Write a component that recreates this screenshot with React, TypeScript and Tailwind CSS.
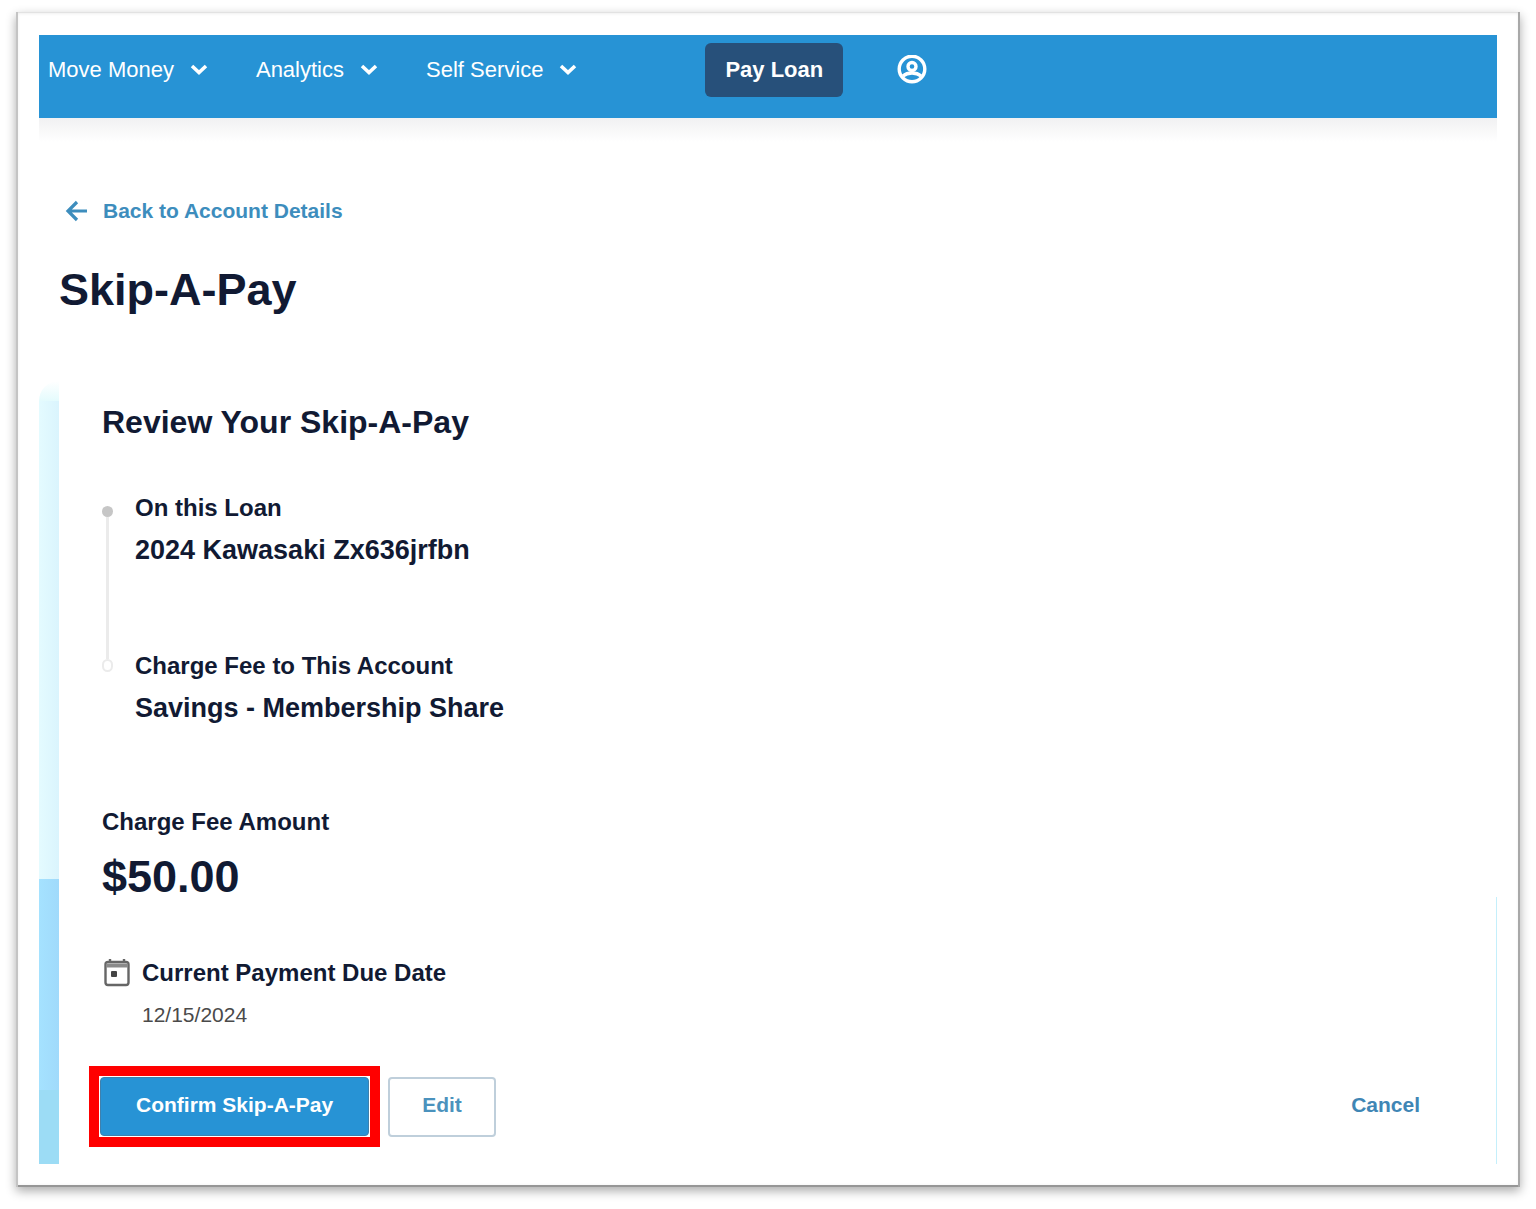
import React from 'react';

interface NavMenuProps {
  label: string;
}

const NavMenu: React.FC<NavMenuProps> = ({ label }) => (
  <button type="button" className="flex items-center gap-4 whitespace-nowrap text-[22px] leading-6 text-white">
    {label}
    <svg viewBox="0 0 18 12" className="h-3 w-[18px]" fill="none" stroke="currentColor" strokeWidth="3.6" aria-hidden="true">
      <path d="M2 2 9 8.500l7-6.500" />
    </svg>
  </button>
);

interface StepProps {
  label: string;
  value: string;
}

const Step: React.FC<StepProps> = ({ label, value }) => (
  <div>
    <dt className="text-2xl leading-8">{label}</dt>
    <dd className="mt-2 text-[27px] leading-9">{value}</dd>
  </div>
);

const Header: React.FC = () => (
  <header className="flex items-center bg-[#2793d5] pt-2 pb-[21px] pl-[9px] shadow-[0_1px_0_#c9e6f8]">
    <nav className="flex items-center gap-12">
      <NavMenu label="Move Money" />
      <NavMenu label="Analytics" />
      <NavMenu label="Self Service" />
    </nav>
    <button type="button" className="ml-32 rounded-md bg-[#27507a] px-5 py-[15px] text-[22px] leading-6 font-bold whitespace-nowrap text-white">
      Pay Loan
    </button>
    <button type="button" aria-label="Profile" className="ml-[54px] text-white">
      <svg viewBox="0 0 30 30" className="size-[30px]" fill="none" stroke="currentColor" strokeWidth="3.4" aria-hidden="true">
        <circle cx="15" cy="14" r="12.8" />
        <circle cx="15" cy="11.5" r="4" />
        <path d="M6 21c2.500-2.200 5.500-3 9-3s6.500.8 9 3" />
      </svg>
    </button>
  </header>
);

const App: React.FC = () => {
  return (
    <div className="min-h-screen bg-white px-4 pt-3 pb-[22px] font-['Liberation_Sans',Arial,sans-serif]">
      <div className="bg-white p-[23px] shadow-[inset_2px_0_0_#c4c4c4,inset_-2px_0_0_#a8a8a8,inset_0_-2px_0_#969696,inset_0_1px_0_#e2e2e2,inset_0_0_4px_#d8d8d8,0_4px_10px_#00000055]">
        <Header />
        <div className="h-6 bg-linear-to-b from-[#f1f1f2] to-white" />

        <main className="text-[#111a33]">
          <a href="#account" className="mt-[57px] ml-[26px] flex w-fit items-center gap-[14px] text-[21px] leading-6 font-bold text-[#3d8dbd]">
            <svg viewBox="0 0 24 24" className="size-6" fill="none" stroke="currentColor" strokeWidth="3.2" aria-hidden="true">
              <path d="M22 12H3M12 3l-9 9 9 9" />
            </svg>
            Back to Account Details
          </a>
          <h1 className="mt-10 ml-5 text-[45px] leading-[54px] font-bold">Skip-A-Pay</h1>

          <div className="mt-10 flex">
            <div className="mt-6 flex w-5 shrink-0 flex-col">
              <div className="h-5 rounded-tl-full bg-linear-to-b from-white to-[#e4fbfd]" />
              <div className="h-[478px] bg-linear-to-r from-[#e4fbff] to-[#daf4fd]" />
              <div className="h-[211px] bg-linear-to-r from-[#a5e2ff] to-[#a0dafb]" />
              <div className="flex-1 bg-[#9cdcf5]" />
            </div>

            <section className="flex-1 pt-[45px] pb-[17px] font-bold">
              <div className="pl-[43px]">
                <h2 className="text-[32px] leading-10">Review Your Skip-A-Pay</h2>

                <div className="mt-[50px] flex gap-[22px]">
                  <div className="flex w-[11px] flex-col items-center pt-[14px] pb-[54px]" aria-hidden="true">
                    <span className="size-[11px] rounded-full bg-[#c6c6c6]" />
                    <span className="w-[3px] flex-1 bg-[#ebebeb]" />
                    <span className="h-[13px] w-[11px] rounded-full border-2 border-[#ebebeb]" />
                  </div>
                  <dl className="flex flex-col gap-[82px]">
                    <Step label="On this Loan" value="2024 Kawasaki Zx636jrfbn" />
                    <Step label="Charge Fee to This Account" value="Savings - Membership Share" />
                  </dl>
                </div>

                <p className="mt-20 text-2xl leading-8">Charge Fee Amount</p>
                <p className="mt-3 text-[45px] leading-[54px]">$50.00</p>

                <div className="mt-[53px] flex items-center gap-3">
                  <svg viewBox="0 0 28 30" className="h-[30px] w-7" fill="none" stroke="#666666" strokeWidth="2.4" aria-hidden="true">
                    <rect x="3.500" y="4" width="23" height="23" rx="2.5" />
                    <path d="M4 7.500h22" strokeWidth="4" stroke="#8a8a8a" />
                    <path d="M8 1v4M22 1v4" />
                    <rect x="9" y="13" width="6" height="6" rx="1" fill="#444444" stroke="none" />
                  </svg>
                  <p className="text-2xl leading-8">Current Payment Due Date</p>
                </div>
                <p className="mt-[14px] ml-10 text-[21px] leading-6 font-normal text-[#4a4a4a]">12/15/2024</p>
              </div>

              <div className="mt-[39px] flex items-center pr-[76px] pl-[30px] text-[21px] leading-6">
                <div className="border-10 border-[#ff0000] p-px">
                  <button type="button" className="h-[59px] rounded-sm border border-[#3f80ad] bg-[#2793d5] px-[35px] pb-1 whitespace-nowrap text-white">
                    Confirm Skip-A-Pay
                  </button>
                </div>
                <button type="button" className="ml-2 h-[60px] rounded-sm border-2 border-[#bfcfdb] px-8 pb-1 text-[#4b92bd]">
                  Edit
                </button>
                <button type="button" className="ml-auto pb-1 text-[#3f86b5]">
                  Cancel
                </button>
              </div>
            </section>

            <div className="mt-[540px] w-px shrink-0 bg-[#c5effb]" />
          </div>
        </main>
      </div>
    </div>
  );
};

export default App;
